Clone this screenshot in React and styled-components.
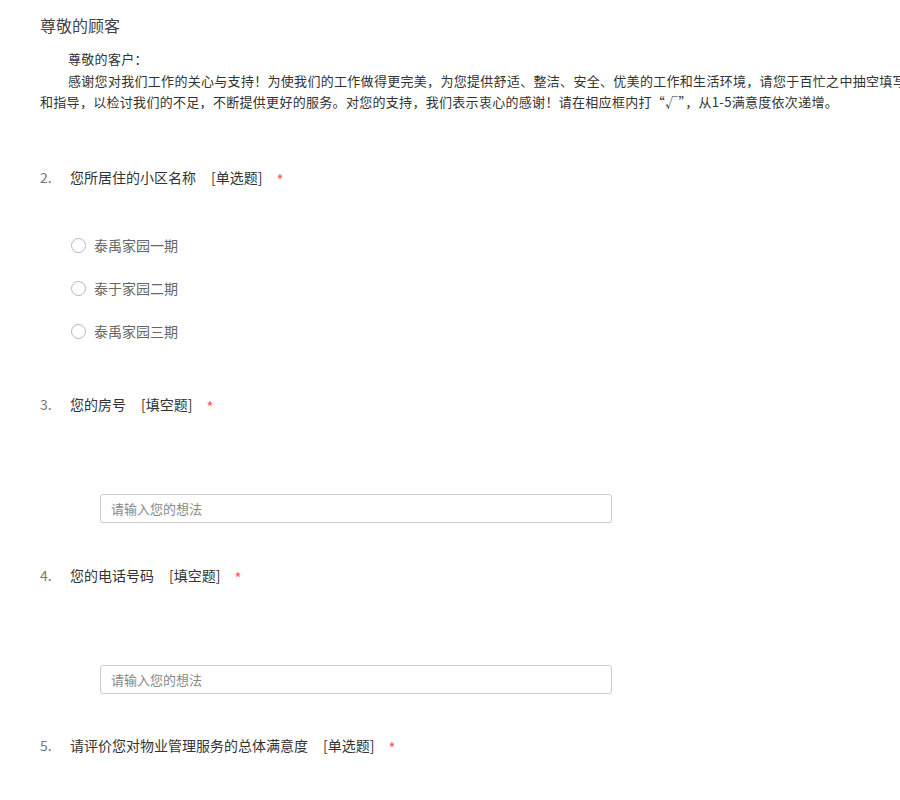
import React from 'react';
import styled, { createGlobalStyle } from 'styled-components';

const GlobalStyle = createGlobalStyle`
  html, body {
    margin: 0;
    padding: 0;
    background: #fff;
    overflow: hidden;
  }
  body {
    font-family: "Noto Sans CJK SC", "Noto Sans", sans-serif;
    color: #333;
  }
`

const Page = styled.div`
  width: 900px;
  height: 800px;
  overflow: hidden;
  padding: 15px 0 0 40px;
  box-sizing: border-box;
`

const Title = styled.h1`
  margin: 0;
  font-size: 16px;
  line-height: 20px;
  font-weight: normal;
  color: #444;
`

const Intro = styled.div`
  margin-top: 13px;
  font-size: 13px;
  letter-spacing: 0.3px;
  line-height: 21.5px;
  color: #333;
  white-space: nowrap;
`

const Indented = styled.div`
  text-indent: 28px;
`

const Question = styled.section`
  margin-top: ${p => p.$gap}px;
`

const QuestionTitle = styled.div`
  display: flex;
  align-items: center;
  height: 20px;
  font-size: 14px;
  color: #333;
`

const Num = styled.span`
  width: 30px;
  color: #777;
`

const Kind = styled.span`
  margin-left: 15px;
  color: #333;
`

const Required = styled.span`
  margin-left: 14px;
  color: #f55;
  font-size: 15px;
  line-height: 1;
  position: relative;
  top: 3px;
`

const Options = styled.div`
  padding: 37px 0 0 30px;
`

const Option = styled.label`
  display: flex;
  align-items: center;
  height: 43px;
  font-size: 14px;
  color: #666;
  cursor: pointer;
`

const Radio = styled.span`
  width: 13px;
  height: 13px;
  border: 1px solid #b5b5b5;
  border-radius: 50%;
  margin: 0 8px 0 1px;
  box-sizing: content-box;
`

const InputWrap = styled.div`
  padding: 80px 0 0 60px;
`

const TextInput = styled.input`
  display: block;
  width: 512px;
  height: 29px;
  box-sizing: border-box;
  border: 1px solid #ccc;
  border-radius: 3px;
  padding: 0 10px;
  font-family: inherit;
  font-size: 13px;
  color: #333;
  outline: none;
  &::placeholder {
    color: #888;
  }
`

const questions = [
  { no: 2, text: '您所居住的小区名称', kind: '[单选题]', type: 'radio', options: ['泰禹家园一期', '泰于家园二期', '泰禹家园三期'], gap: 54 },
  { no: 3, text: '您的房号', kind: '[填空题]', type: 'text', gap: 41 },
  { no: 4, text: '您的电话号码', kind: '[填空题]', type: 'text', gap: 42 },
  { no: 5, text: '请评价您对物业管理服务的总体满意度', kind: '[单选题]', type: 'none', gap: 41 },
]

const App = () => {
  return (
    <Page>
      <GlobalStyle />
      <Title>尊敬的顾客</Title>

      <Intro>
        <Indented>尊敬的客户：</Indented>
        <Indented>感谢您对我们工作的关心与支持！为使我们的工作做得更完美，为您提供舒适、整洁、安全、优美的工作和生活环境，请您于百忙之中抽空填写此问卷，给予我们宝贵的意见</Indented>
        <div>和指导，以检讨我们的不足，不断提供更好的服务。对您的支持，我们表示衷心的感谢！请在相应框内打“√”，从1-5满意度依次递增。</div>
      </Intro>

      {questions.map(q => (
        <Question key={q.no} $gap={q.gap}>
          <QuestionTitle>
            <Num>{q.no}.</Num>
            <span>{q.text}</span>
            <Kind>{q.kind}</Kind>
            <Required>*</Required>
          </QuestionTitle>
          {q.type === 'radio' && (
            <Options>
              {q.options.map(o => (
                <Option key={o}>
                  <Radio />
                  {o}
                </Option>
              ))}
            </Options>
          )}
          {q.type === 'text' && (
            <InputWrap>
              <TextInput placeholder="请输入您的想法" />
            </InputWrap>
          )}
        </Question>
      ))}
    </Page>
  )
}

export default App;
